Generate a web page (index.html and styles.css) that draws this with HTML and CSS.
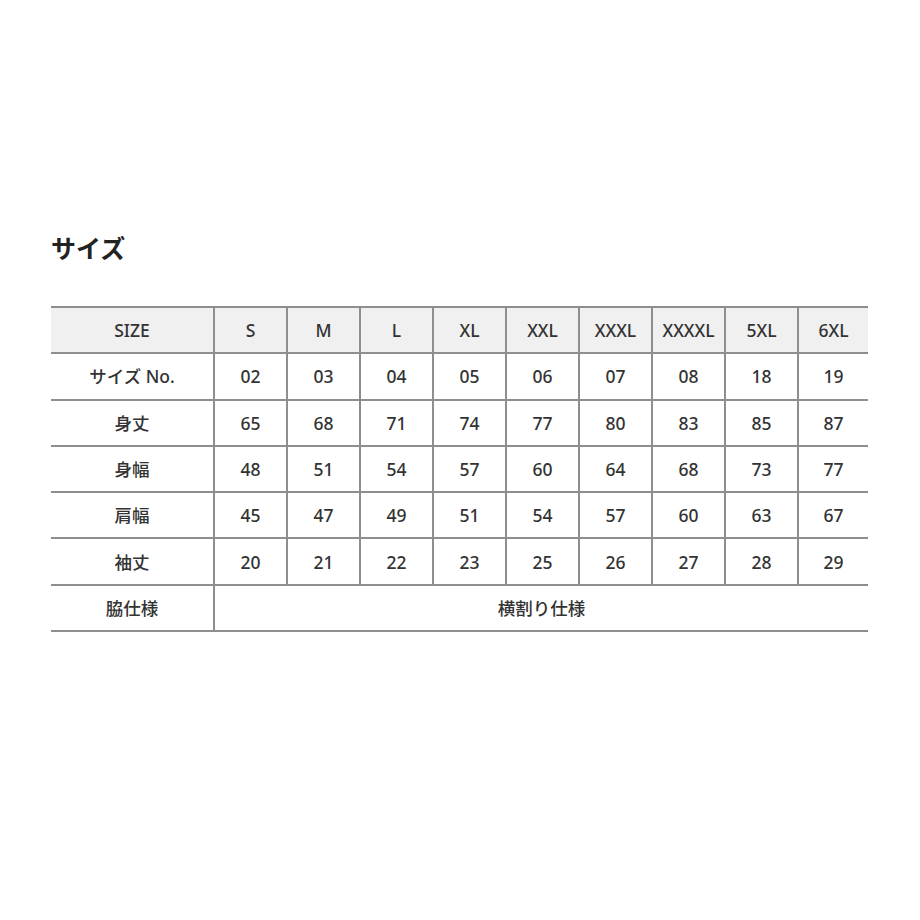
FILE: index.html
```html
<!DOCTYPE html>
<html lang="ja">
<head>
<meta charset="utf-8">
<link rel="stylesheet" href="styles.css">
</head>
<body>
<div class="page">
  <h2 class="title">サイズ</h2>
  <table class="size-table">
    <colgroup>
      <col class="c-head">
      <col class="c"><col class="c"><col class="c"><col class="c"><col class="c"><col class="c"><col class="c"><col class="c">
      <col class="c-last">
    </colgroup>
    <thead>
      <tr class="hrow">
        <td>SIZE</td><td>S</td><td>M</td><td>L</td><td>XL</td><td>XXL</td><td>XXXL</td><td>XXXXL</td><td>5XL</td><td>6XL</td>
      </tr>
    </thead>
    <tbody>
      <tr><td>サイズ No.</td><td>02</td><td>03</td><td>04</td><td>05</td><td>06</td><td>07</td><td>08</td><td>18</td><td>19</td></tr>
      <tr><td>身丈</td><td>65</td><td>68</td><td>71</td><td>74</td><td>77</td><td>80</td><td>83</td><td>85</td><td>87</td></tr>
      <tr><td>身幅</td><td>48</td><td>51</td><td>54</td><td>57</td><td>60</td><td>64</td><td>68</td><td>73</td><td>77</td></tr>
      <tr><td>肩幅</td><td>45</td><td>47</td><td>49</td><td>51</td><td>54</td><td>57</td><td>60</td><td>63</td><td>67</td></tr>
      <tr><td>袖丈</td><td>20</td><td>21</td><td>22</td><td>23</td><td>25</td><td>26</td><td>27</td><td>28</td><td>29</td></tr>
      <tr><td>脇仕様</td><td colspan="9">横割り仕様</td></tr>
    </tbody>
  </table>
</div>
</body>
</html>
```
FILE: styles.css
```css
html, body {
  margin: 0;
  padding: 0;
  background: #ffffff;
}
.page {
  padding: 231px 0 0 51px;
  font-family: "Noto Sans", "Noto Sans CJK JP", sans-serif;
  color: #333333;
}
.title {
  margin: 0;
  font-family: "Noto Sans CJK JP", sans-serif;
  font-size: 25px;
  line-height: 32px;
  font-weight: 700;
  color: #222222;
}
.size-table {
  margin-top: 43px;
  border-collapse: collapse;
  table-layout: fixed;
  width: 817px;
}
.c-head { width: 163px; }
.c { width: 73px; }
.c-last { width: 70px; }
.size-table td {
  height: 44.3px;
  padding: 0;
  text-align: center;
  vertical-align: middle;
  font-size: 17.5px;
  line-height: 20px;
  font-weight: 500;
  color: #333333;
  border-top: 2px solid #8e8e8e;
  border-bottom: 2px solid #8e8e8e;
  border-left: 2px solid #8e8e8e;
  white-space: nowrap;
}
.size-table td:first-child {
  border-left: none;
}
.hrow td {
  background: #f0f0f0;
}
```
